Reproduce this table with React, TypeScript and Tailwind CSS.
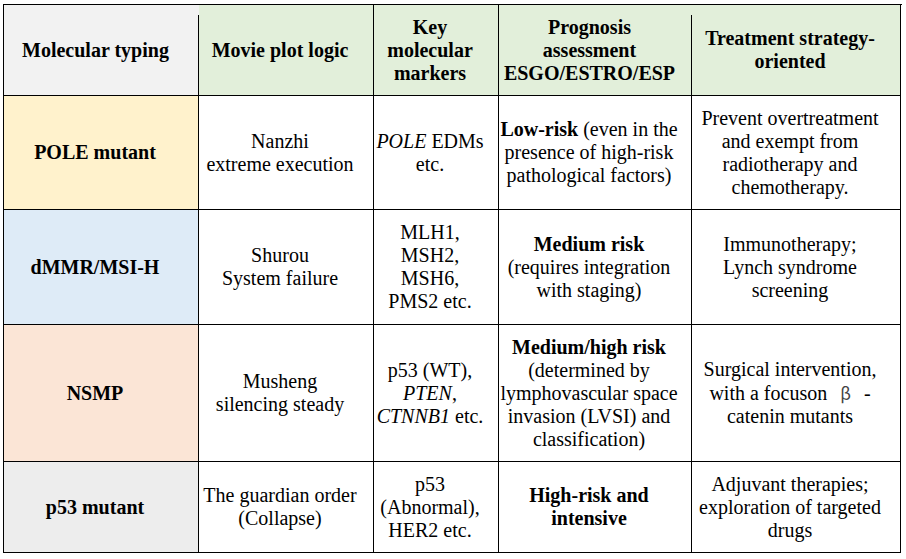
import React from "react";

type Cell = {
  content: React.ReactNode;
  bg?: string;
};

// text sits a little left of centre in every cell, like the source document
const cellBase =
  "flex items-center justify-center text-center border-r border-b border-black pl-0 pr-3";

const rows: { first: Cell; rest: React.ReactNode[] }[] = [
  {
    first: { content: <b>POLE mutant</b>, bg: "bg-[#fff2cc]" },
    rest: [
      <>
        Nanzhi
        <br />
        extreme execution
      </>,
      <>
        <i>POLE</i> EDMs
        <br />
        etc.
      </>,
      <>
        <b>Low-risk</b> (even in the
        <br />
        presence of high-risk
        <br />
        pathological factors)
      </>,
      <>
        Prevent overtreatment
        <br />
        and exempt from
        <br />
        radiotherapy and
        <br />
        chemotherapy.
      </>,
    ],
  },
  {
    first: { content: <b>dMMR/MSI-H</b>, bg: "bg-[#deebf7]" },
    rest: [
      <>
        Shurou
        <br />
        System failure
      </>,
      <>
        MLH1,
        <br />
        MSH2,
        <br />
        MSH6,
        <br />
        PMS2 etc.
      </>,
      <>
        <b>Medium risk</b>
        <br />
        (requires integration
        <br />
        with staging)
      </>,
      <>
        Immunotherapy;
        <br />
        Lynch syndrome
        <br />
        screening
      </>,
    ],
  },
  {
    first: { content: <b>NSMP</b>, bg: "bg-[#fbe5d6]" },
    rest: [
      <>
        Musheng
        <br />
        silencing steady
      </>,
      <>
        p53 (WT),
        <br />
        <i>PTEN</i>,
        <br />
        <i>CTNNB1</i> etc.
      </>,
      <>
        <b>Medium/high risk</b>
        <br />
        (determined by
        <br />
        lymphovascular space
        <br />
        invasion (LVSI) and
        <br />
        classification)
      </>,
      <>
        Surgical intervention,
        <br />
        with a focuson
        <span className="[font-family:Noto_Sans_CJK_SC,sans-serif] text-[#444] text-[17px] px-[13px]">
          β
        </span>
        -
        <br />
        catenin mutants
      </>,
    ],
  },
  {
    first: { content: <b>p53 mutant</b>, bg: "bg-[#ededed]" },
    rest: [
      <>
        The guardian order
        <br />
        (Collapse)
      </>,
      <>
        p53
        <br />
        (Abnormal),
        <br />
        HER2 etc.
      </>,
      <>
        <b>
          High-risk and
          <br />
          intensive
        </b>
      </>,
      <>
        Adjuvant therapies;
        <br />
        exploration of targeted
        <br />
        drugs
      </>,
    ],
  },
];

export default function App() {
  return (
    <div className="w-[906px] h-[559px] bg-white overflow-hidden [font-family:Liberation_Serif,serif] text-[20px] leading-[23px] text-black">
      <div className="ml-[3px] mt-[4px] w-[899px] grid grid-cols-[195px_175px_125px_193px_209px] grid-rows-[91px_114px_115px_137px_91px] border-t border-l border-black">
        {/* header row */}
        <div className="relative flex items-center justify-center text-center border-b border-black bg-[#f2f2f2] font-bold pr-3 after:absolute after:right-0 after:top-[10px] after:bottom-0 after:w-px after:bg-black">
          <span>Molecular typing</span>
        </div>
        <div className={`${cellBase} bg-[#e2efda] font-bold`}>Movie plot logic</div>
        <div className={`${cellBase} bg-[#e2efda] font-bold`}>
          <span>
            Key
            <br />
            molecular
            <br />
            markers
          </span>
        </div>
        <div className="relative flex items-center justify-center text-center border-b border-black bg-[#e2efda] font-bold pr-3 after:absolute after:right-0 after:top-[10px] after:bottom-0 after:w-px after:bg-black">
          <span>
            Prognosis
            <br />
            assessment
            <br />
            ESGO/ESTRO/ESP
          </span>
        </div>
        <div className={`${cellBase} bg-[#e2efda] font-bold`}>
          <span>
            Treatment strategy-
            <br />
            oriented
          </span>
        </div>

        {rows.map((row, i) => (
          <React.Fragment key={i}>
            <div className={`${cellBase} ${row.first.bg}`}>
              <span>{row.first.content}</span>
            </div>
            {row.rest.map((c, j) => (
              <div key={j} className={cellBase}>
                <span>{c}</span>
              </div>
            ))}
          </React.Fragment>
        ))}
      </div>
    </div>
  );
}
